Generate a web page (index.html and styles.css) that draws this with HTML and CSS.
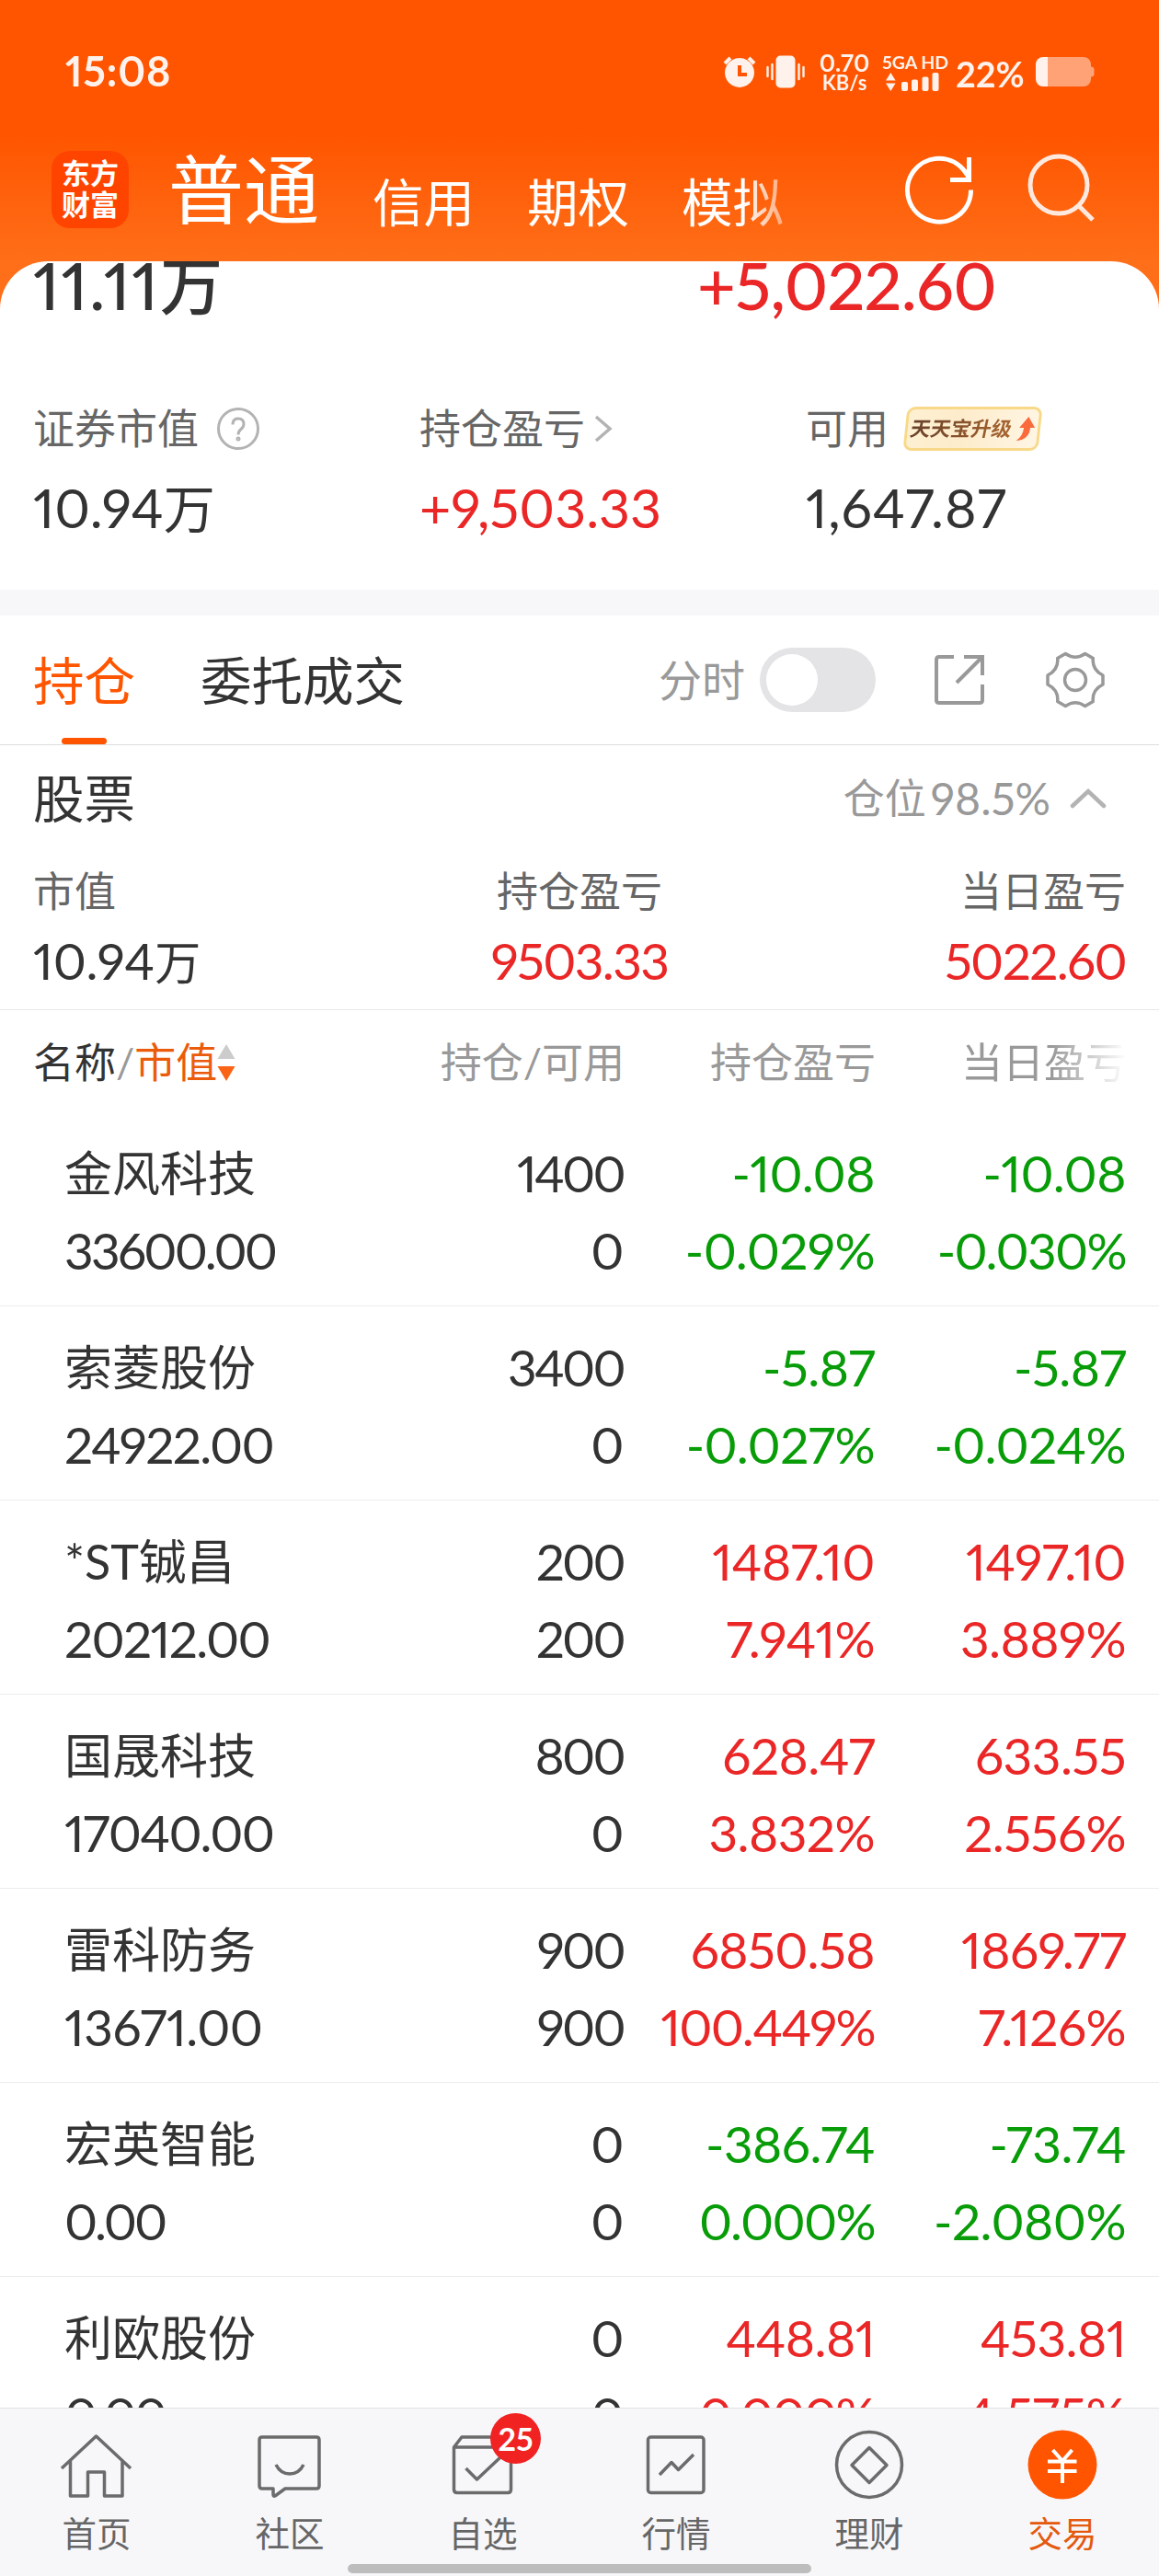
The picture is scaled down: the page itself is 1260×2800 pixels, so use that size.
FILE: index.html
```
<!DOCTYPE html>
<html lang="zh-CN">
<head>
  <meta charset="UTF-8">
  <meta name="viewport" content="width=device-width, initial-scale=1.0">
  <title>交易</title>
  <link rel="stylesheet" href="styles.css">
</head>
<body>
  <div class="screen">
    <header class="header">
      <div class="status">
        <span class="time">15:08</span>
        <svg class="status-alarm" width="36" height="36" viewBox="0 0 36 36">
          <path d="M2 9L8 3M34 9L28 3" stroke="#fff" stroke-width="4" fill="none"/>
          <path fill="#fff" fill-rule="evenodd" d="M18 3a16 16 0 1 0 .01 0zM16 11h4v8h6v4H16z"/>
        </svg>
        <svg class="status-vibrate" width="42" height="36" viewBox="0 0 42 36">
          <rect x="10.500" y="0.500" width="21" height="35" rx="5" fill="#fff"/>
          <path d="M1.500 13v10M6.500 10v16M35.500 10v16M40.500 13v10" stroke="#fff" stroke-width="2.400" stroke-linecap="round"/>
        </svg>
        <div class="speed"><span>0.70</span><small>KB/s</small></div>
        <div class="signal">
          <span>5GA HD</span>
          <svg width="60" height="20" viewBox="0 0 60 20" fill="#fff">
            <path d="M0 8.500L5.300 0l5.300 8.500zM0 11.500h10.600L5.300 20z"/>
            <rect x="17" y="10" width="7" height="10" rx="2"/>
            <rect x="28" y="7.500" width="7" height="12.500" rx="2"/>
            <rect x="39.500" y="4.500" width="7" height="15.500" rx="2"/>
            <rect x="50.500" y="0" width="7" height="20" rx="2"/>
          </svg>
        </div>
        <span class="percent">22%</span>
        <svg class="battery" width="64" height="32" viewBox="0 0 64 32">
          <path fill="#fff" opacity=".5" d="M13 0h39a8 8 0 0 1 8 8v2.500q3.500 0 3.500 3v5q0 3-3.500 3V24a8 8 0 0 1-8 8H13z"/>
          <path fill="#fff" d="M13 0H8a8 8 0 0 0-8 8v16a8 8 0 0 0 8 8h5z"/>
        </svg>
      </div>
      <div class="topbar">
        <div class="logo">东方<br>财富</div>
        <nav class="accounts">
          <a class="current">普通</a>
          <a>信用</a>
          <a>期权</a>
          <a class="fade-tab">模拟</a>
        </nav>
        <svg class="refresh" width="80" height="80" viewBox="0 0 80 80" fill="none" stroke="#fff" stroke-width="5">
          <path d="M74.500 40.500A34.500 34.500 0 1 1 68 20.500Q71 24 72.500 28"/>
          <path d="M72.500 5v24.500H52"/>
        </svg>
        <svg class="search" width="80" height="80" viewBox="0 0 80 80" fill="none" stroke="#ffe9df" stroke-width="5">
          <circle cx="36" cy="35" r="31"/>
          <path d="M57 57l16 16"/>
        </svg>
      </div>
    </header>

    <main class="content">
      <section class="overview">
        <div class="totals">
          <div class="total total-assets">11.11<span class="wan">万</span></div>
          <div class="total up">+5,022.60</div>
        </div>
        <div class="assets">
          <div class="asset">
            <div class="label">证券市值
              <svg class="help" width="46" height="46" viewBox="0 0 46 46" fill="none" stroke="#b3b3b3" stroke-width="3">
                <circle cx="23" cy="23" r="21.500"/>
                <path d="M17 18.500q0-6.500 6-6.500t6 6q0 3-3 5.500t-3 6"/>
                <circle cx="23" cy="34" r="1" />
              </svg>
            </div>
            <div class="value">10.94<span class="wan">万</span></div>
          </div>
          <div class="asset">
            <div class="label">持仓盈亏
              <svg class="more" width="20" height="30" viewBox="0 0 20 30" fill="none" stroke="#b3b3b3" stroke-width="3.500"><path d="M2 2l15 13L2 28"/></svg>
            </div>
            <div class="value up">+9,503.33</div>
          </div>
          <div class="asset">
            <div class="label">可用
              <span class="promo">
                <span class="promo-text">天天宝升级</span>
                <svg width="19" height="26" viewBox="0 0 19 26"><path fill="#fa6a3c" d="M11 0l8 12h-5q0 10-8 13-4 1-6 1 7-5 7-14H2z"/></svg>
              </span>
            </div>
            <div class="value wide">1,647.87</div>
          </div>
        </div>
      </section>

      <section class="tabs">
        <a class="tab active">持仓</a>
        <a class="tab">委托成交</a>
        <span class="minute">分时</span>
        <span class="switch"></span>
        <svg class="share" width="56" height="56" viewBox="0 0 56 56" fill="none" stroke="#999" stroke-width="4">
          <path d="M22 3H6Q3 3 3 6v44q0 3 3 3h44q3 0 3-3V33M33 3h20v20M53 3L25 31"/>
        </svg>
        <svg class="gear" width="66" height="66" viewBox="-33 -33 66 66" fill="none" stroke="#999" stroke-width="3.500" stroke-linejoin="round">
          <path d="M30 -5V5Q18 11 19.300 23.500L10.700 28.500Q0 21 -10.700 28.500L-19.300 23.500Q-18 11 -30 5V-5Q-18 -11 -19.300 -23.500L-10.700 -28.500Q0 -21 10.700 -28.500L19.300 -23.500Q18 -11 30 -5Z"/>
          <circle r="11.500"/>
        </svg>
      </section>

      <section class="summary">
        <div class="summary-head">
          <h2>股票</h2>
          <div class="position">仓位<span class="ratio">98.5%</span>
            <svg width="40" height="24" viewBox="0 0 40 24" fill="none" stroke="#b3b3b3" stroke-width="4.500" stroke-linecap="round"><path d="M3 20L20 4l17 16"/></svg>
          </div>
        </div>
        <div class="summary-cols">
          <div><div class="label">市值</div><div class="num">10.94<span class="wan">万</span></div></div>
          <div><div class="label">持仓盈亏</div><div class="num up tight">9503.33</div></div>
          <div><div class="label">当日盈亏</div><div class="num up tight">5022.60</div></div>
        </div>
      </section>

      <section class="holdings">
        <div class="row thead">
          <div class="sorter"><b>名称</b>/<em>市值</em>
            <svg width="20" height="42" viewBox="0 0 20 42"><path fill="#ccc" d="M10 1l9.500 16H.5z"/><path fill="#fa6414" d="M.5 25h19L10 41z"/></svg>
          </div>
          <div>持仓/可用</div>
          <div>持仓盈亏</div>
          <div class="fade-col">当日盈亏</div>
        </div>
        <div class="row">
          <div><span class="name">金风科技</span><span class="tighter">33600.00</span></div>
          <div><span class="tighter">1400</span><span>0</span></div>
          <div class="down"><span>-10.08</span><span>-0.029%</span></div>
          <div class="down"><span>-10.08</span><span class="tight">-0.030%</span></div>
        </div>
        <div class="row">
          <div><span class="name">索菱股份</span><span class="tight">24922.00</span></div>
          <div><span class="tighter">3400</span><span>0</span></div>
          <div class="down"><span>-5.87</span><span>-0.027%</span></div>
          <div class="down"><span>-5.87</span><span>-0.024%</span></div>
        </div>
        <div class="row">
          <div><span class="name">*ST铖昌</span><span class="tight">20212.00</span></div>
          <div><span class="tighter">200</span><span class="tighter">200</span></div>
          <div class="up"><span>1487.10</span><span>7.941%</span></div>
          <div class="up"><span>1497.10</span><span>3.889%</span></div>
        </div>
        <div class="row">
          <div><span class="name">国晟科技</span><span class="tight">17040.00</span></div>
          <div><span class="tighter">800</span><span>0</span></div>
          <div class="up"><span>628.47</span><span>3.832%</span></div>
          <div class="up"><span>633.55</span><span>2.556%</span></div>
        </div>
        <div class="row">
          <div><span class="name">雷科防务</span><span>13671.00</span></div>
          <div><span class="tighter">900</span><span class="tighter">900</span></div>
          <div class="up"><span>6850.58</span><span class="tight">100.449%</span></div>
          <div class="up"><span>1869.77</span><span>7.126%</span></div>
        </div>
        <div class="row">
          <div><span class="name">宏英智能</span><span class="tighter">0.00</span></div>
          <div><span>0</span><span>0</span></div>
          <div class="down"><span>-386.74</span><span class="tight">0.000%</span></div>
          <div class="down"><span>-73.74</span><span>-2.080%</span></div>
        </div>
        <div class="row">
          <div><span class="name">利欧股份</span><span class="tighter">0.00</span></div>
          <div><span>0</span><span>0</span></div>
          <div class="up"><span>448.81</span><span class="tight">0.000%</span></div>
          <div class="up"><span>453.81</span><span>4.575%</span></div>
        </div>
      </section>
    </main>

    <footer class="nav">
      <a class="nav-item">
        <svg viewBox="0 0 84 84"><path d="M4 46L41.500 11 79 46M13.500 38V76H32.500V50H50.500V76H70V38"/></svg>
        首页
      </a>
      <a class="nav-item">
        <svg viewBox="0 0 84 84"><path d="M12 12H71Q74 12 74 15V65Q74 68 71 68H37L26 76Q24 77 24 74V68H12Q9 68 9 65V15Q9 12 12 12ZM27 42Q32 52 42 52T57 42"/></svg>
        社区
      </a>
      <a class="nav-item">
        <svg viewBox="0 0 84 84"><path d="M10.500 23L19 12H64L72.500 23V69Q72.500 72.500 69 72.500H14Q10.500 72.500 10.500 69ZM10.500 23H72.500M23.500 46L35.500 58 61 34"/></svg>
        <span class="badge">25</span>
        自选
      </a>
      <a class="nav-item">
        <svg viewBox="0 0 84 84"><rect x="11.500" y="12" width="60.500" height="60.500" rx="3"/><path d="M24 53L37 39.500 44.500 47.500 61 31"/></svg>
        行情
      </a>
      <a class="nav-item">
        <svg viewBox="0 0 84 84"><circle cx="42" cy="42" r="35.500"/><path d="M42 23.500L61 42.500 42 61.500 23 42.500Z"/></svg>
        理财
      </a>
      <a class="nav-item selected">
        <svg viewBox="0 0 84 84"><circle class="disc" cx="42" cy="42" r="37.500"/><path class="yen" d="M31.500 26L42 38 52.500 26M26 38.500H57.500M26 49H57.500M42 38V62"/></svg>
        交易
      </a>
      <i class="home-indicator"></i>
    </footer>
  </div>
</body>
</html>
```
FILE: styles.css
```
* {
  box-sizing: border-box;
}
body {
  margin: 0;
  font-family: Lato, "Noto Sans CJK SC", sans-serif;
  font-feature-settings: "pnum";
  color: #333;
  background: #fff;
}
svg {
  display: block;
  flex: none;
}
.screen {
  display: flex;
  flex-direction: column;
  width: 1260px;
  height: 2800px;
  overflow: hidden;
  background: linear-gradient(#ff5500 145px, #ff6e18 284px);
}

/* header */
.header {
  flex: none;
  height: 284px;
  color: #fff;
}
.status {
  display: flex;
  align-items: center;
  height: 156px;
  padding: 0 70px 0 71px;
  opacity: .92;
}
.time {
  flex: 1;
  margin-top: -2px;
  font-size: 45px;
  font-weight: 700;
  letter-spacing: .8px;
}
.status-alarm {
  margin-left: 1px;
}
.status-vibrate {
  margin: 0 15px 0 11px;
}
.speed {
  display: flex;
  flex-direction: column;
  align-items: center;
  width: 56px;
  margin-right: 13px;
  font-size: 26px;
  line-height: 24px;
  font-weight: 700;
}
.speed small {
  font-size: 22px;
  line-height: 20px;
}
.signal {
  width: 71px;
  font-size: 19.500px;
  line-height: 22px;
  font-weight: 700;
  white-space: nowrap;
}
.signal svg {
  margin-left: 4px;
}
.signal span {
  display: block;
}
.percent {
  width: 78px;
  margin: 4px 9px 0 9px;
  font-size: 38px;
  font-weight: 700;
}
.topbar {
  display: flex;
  height: 100px;
  padding: 0 65px 0 56px;
  align-items: center;
}
.logo {
  width: 84px;
  height: 84px;
  padding-top: 7px;
  border-radius: 20px;
  background: #ff4400;
  font-size: 31px;
  line-height: 34px;
  font-weight: 700;
  text-align: center;
}
.accounts {
  display: flex;
  align-items: flex-start;
  gap: 57px;
  flex: 1;
  margin-left: 43px;
  font-size: 55.500px;
  line-height: 100px;
}
.accounts a {
  padding-top: 27px;
}
.accounts .current {
  margin-right: 1px;
  padding-top: 12px;
  font-size: 82px;
}
.fade-tab {
  -webkit-mask-image: linear-gradient(90deg, #000 60%, rgba(0, 0, 0, .45));
  mask-image: linear-gradient(90deg, #000 60%, rgba(0, 0, 0, .45));
}
.search {
  margin-left: 54px;
}

/* assets */
.content {
  flex: 1;
  min-height: 0;
  overflow: hidden;
  border-radius: 52px 52px 0 0;
  background: #fff;
}
.overview {
  height: 385px;
  border-bottom: 28px solid #f7f7fa;
}
.totals {
  display: flex;
  height: 70px;
  padding-left: 36px;
}
.total {
  flex: none;
  width: 722px;
  font-size: 72px;
  line-height: 50px;
  font-weight: 500;
  letter-spacing: -.01em;
}
.total-assets {
  letter-spacing: .025em;
}
.total .wan {
  font-size: 68px;
}
.assets {
  display: grid;
  grid-template-columns: repeat(3, 420px);
  padding: 80px 0 0 36px;
}
.label {
  font-size: 45px;
  line-height: 64px;
  color: #666;
}
.asset .label {
  display: flex;
  align-items: center;
}
.help {
  margin-left: 20px;
}
.more {
  margin-left: 10px;
}
.value {
  margin-top: 19px;
  font-size: 59px;
  line-height: 70px;
}
.value .wan {
  font-size: 56px;
}
.up {
  color: #ea2626;
}
.down {
  color: #089c08;
}
.wide {
  letter-spacing: .015em;
}
.promo {
  display: flex;
  align-items: center;
  justify-content: center;
  gap: 5px;
  width: 147px;
  height: 48px;
  margin-left: 18px;
  border: 3px solid #f8d989;
  border-radius: 9px;
  background: linear-gradient(90deg, #fdf0d2, #fdeccb 40%, #fff5e3);
  transform: skewX(-6deg);
}
.promo-text {
  font-size: 22px;
  line-height: 40px;
  font-weight: 700;
  color: transparent;
  background: linear-gradient(90deg, #67402a, #a8652f);
  -webkit-background-clip: text;
  background-clip: text;
  transform: skewX(-6deg);
}

/* tabs */
.tabs {
  display: flex;
  align-items: center;
  height: 141px;
  padding: 0 58px 0 36px;
  border-bottom: 1px solid #ddd;
}
.tab {
  position: relative;
  margin-right: 71px;
  padding-top: 2px;
  font-size: 55.500px;
  line-height: 138px;
}
.tab.active {
  color: #ff5500;
}
.tab.active::after {
  content: "";
  position: absolute;
  left: 31px;
  bottom: 0;
  width: 49px;
  height: 7px;
  border-radius: 4px;
  background: #ff5500;
}
.minute {
  margin-left: auto;
  font-size: 47px;
  line-height: 70px;
  color: #999;
}
.switch {
  width: 126px;
  height: 70px;
  margin: 0 63px 0 16px;
  padding: 7px;
  border-radius: 35px;
  background: #e4e4e6;
}
.switch::before {
  content: "";
  display: block;
  width: 56px;
  height: 56px;
  border-radius: 50%;
  background: #fff;
}
.gear {
  margin-left: 65px;
}

/* stock summary */
.summary {
  height: 288px;
  padding: 0 36px;
  border-bottom: 1px solid #e8e8e8;
}
.summary-head {
  display: flex;
  align-items: center;
  justify-content: space-between;
  height: 116px;
  line-height: 116px;
}
.summary h2 {
  margin: 0;
  font-size: 55.500px;
  font-weight: 400;
}
.position {
  display: flex;
  align-items: center;
  margin-right: 21px;
  font-size: 45px;
  color: #999;
}
.position svg {
  margin-left: 21px;
}
.ratio {
  margin-left: 5px;
  font-size: 48px;
}
.summary-cols {
  display: grid;
  grid-template-columns: 1fr 1fr 1fr;
  text-align: center;
  padding-top: 11px;
}
.summary-cols > :first-child {
  text-align: left;
}
.summary-cols > :last-child {
  text-align: right;
}
.num {
  margin-top: 8px;
  font-size: 55px;
  line-height: 70px;
}
.num .wan {
  font-size: 50px;
}

/* holdings */
.row {
  display: grid;
  grid-template-columns: 430px 178px 273px 273px;
  height: 211px;
  padding: 24px 36px 0 70px;
  border-bottom: 1px solid #ececec;
  font-size: 55px;
  line-height: 84px;
  letter-spacing: -.01em;
  text-align: right;
}
.row > :first-child {
  text-align: left;
}
.row span {
  display: block;
}
.row .name {
  font-size: 52px;
  letter-spacing: 0;
}
.row .tight,
.num.tight {
  letter-spacing: -.03em;
}
.row .tighter {
  letter-spacing: -.05em;
}
.thead {
  grid-template-columns: 435px 208px 273px 273px;
  height: 111px;
  padding: 15px 35px 0 36px;
  border: 0;
  font-size: 45px;
  letter-spacing: 0;
  white-space: nowrap;
  color: #999;
}
.sorter {
  display: flex;
  align-items: center;
  height: 84px;
}
.sorter b {
  font-weight: 400;
  color: #333;
}
.sorter em {
  font-style: normal;
  color: #eb5b0c;
}
.fade-col {
  -webkit-mask-image: linear-gradient(90deg, #000 70%, transparent);
  mask-image: linear-gradient(90deg, #000 70%, transparent);
}

/* bottom navigation */
.nav {
  position: relative;
  flex: none;
  display: grid;
  grid-template-columns: repeat(6, 1fr);
  height: 183px;
  padding-top: 19px;
  border-top: 1px solid #e2e2e4;
  background: #f7f7fa;
}
.nav-item {
  position: relative;
  display: flex;
  flex-direction: column;
  align-items: center;
  font-size: 37.500px;
  line-height: 66px;
  color: #666;
}
.nav-item svg {
  width: 84px;
  height: 84px;
  fill: none;
  stroke: #6b6b6b;
  stroke-width: 3.500;
  stroke-linejoin: round;
}
.nav-item.selected {
  color: #e4590d;
}
.nav-item .disc {
  fill: #ff5500;
  stroke: none;
}
.nav-item .yen {
  stroke: #fff;
  stroke-width: 4;
}
.badge {
  position: absolute;
  left: 113px;
  top: -14px;
  width: 55px;
  height: 55px;
  border-radius: 50%;
  background: #f12222;
  color: #fff;
  font-size: 34px;
  line-height: 55px;
  font-weight: 700;
  text-align: center;
}
.home-indicator {
  position: absolute;
  left: 378px;
  bottom: 3px;
  width: 504px;
  height: 10px;
  border-radius: 5px;
  background: #bdbdbd;
}
```
